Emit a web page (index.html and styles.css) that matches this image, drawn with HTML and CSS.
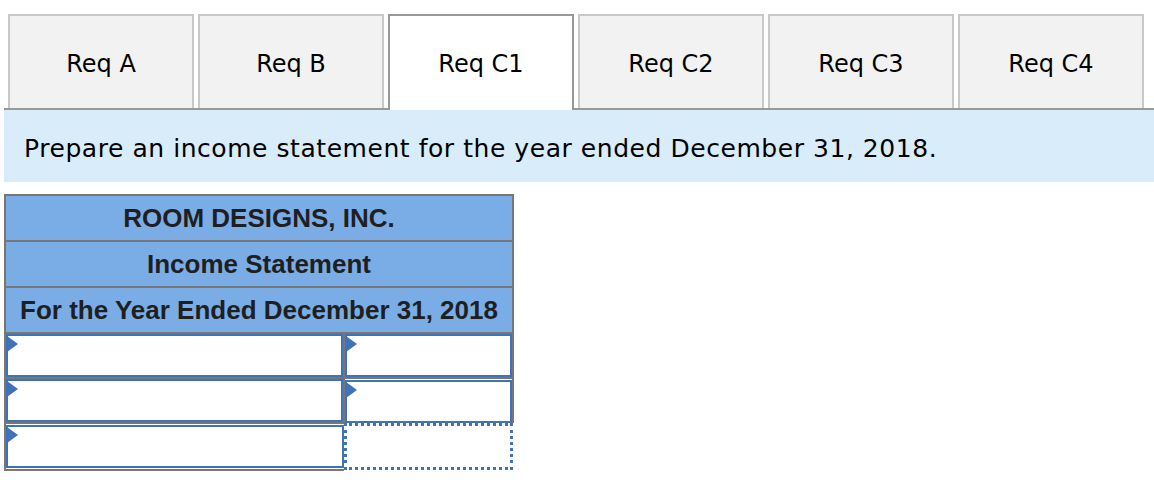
FILE: index.html
```html
<!DOCTYPE html>
<html lang="en">
<head>
    <meta charset="UTF-8">
    <title>Req C1 - Income Statement</title>
    <link rel="stylesheet" href="styles.css">
</head>
<body>
    <div class="tabs">
        <div class="tab">Req A</div>
        <div class="tab">Req B</div>
        <div class="tab active">Req C1</div>
        <div class="tab">Req C2</div>
        <div class="tab">Req C3</div>
        <div class="tab">Req C4</div>
    </div>

    <div class="instructions">Prepare an income statement for the year ended December 31, 2018.</div>

    <table class="statement">
        <tr><th colspan="2">ROOM DESIGNS, INC.</th></tr>
        <tr><th colspan="2">Income Statement</th></tr>
        <tr><th colspan="2">For the Year Ended December 31, 2018</th></tr>
        <tr>
            <td class="label-cell"><div class="entry"><span class="marker"></span></div></td>
            <td class="amount-cell"><div class="entry"><span class="marker"></span></div></td>
        </tr>
        <tr>
            <td class="label-cell"><div class="entry"><span class="marker"></span></div></td>
            <td class="amount-cell"><div class="entry"><span class="marker"></span></div></td>
        </tr>
        <tr>
            <td class="label-cell"><div class="entry"><span class="marker"></span></div></td>
            <td class="amount-cell total"><div class="entry dotted"></div></td>
        </tr>
    </table>
</body>
</html>
```

FILE: styles.css
```css
:root {
    --tab-bg: #f2f2f2;
    --tab-border: #c8c8c8;
    --active-border: #999999;
    --band-bg: #d9ecfa;
    --head-bg: #7aade6;
    --grid-grey: #777777;
    --entry-blue: #3f72b6;
}

body {
    margin: 0;
    background: #ffffff;
    color: #000000;
    font-family: 'DejaVu Sans', Verdana, sans-serif;
}

.tabs {
    display: flex;
    gap: 4px;
    margin: 14px 0 0 4px;
    padding-left: 4px;
    border-bottom: 2px solid var(--active-border);
}

.tab {
    width: 186px;
    height: 94px;
    box-sizing: border-box;
    display: flex;
    align-items: center;
    justify-content: center;
    background: var(--tab-bg);
    border: 2px solid var(--tab-border);
    border-bottom: none;
    font-size: 24px;
    padding-top: 3px;
}

.tab.active {
    background: #ffffff;
    border-color: var(--active-border);
    height: 96px;
    margin-bottom: -2px;
    padding-bottom: 2px;
}

.instructions {
    margin-left: 4px;
    height: 72px;
    box-sizing: border-box;
    display: flex;
    align-items: center;
    padding: 4px 0 0 20px;
    background: var(--band-bg);
    font-size: 25px;
    letter-spacing: 0.55px;
}

.statement {
    margin: 12px 0 0 4px;
    width: 510px;
    border-collapse: collapse;
    font-family: 'Liberation Sans', Arial, sans-serif;
}

.statement th {
    height: 44px;
    padding: 0;
    background: var(--head-bg);
    border: 2px solid var(--grid-grey);
    color: #1f1f1f;
    font-size: 26px;
    font-weight: bold;
    text-align: center;
}

.statement td {
    height: 42px;
    padding: 0;
    border: 2px solid var(--grid-grey);
}

.label-cell {
    width: 337px;
}

.statement td.total {
    border: hidden;
}

.entry {
    position: relative;
    height: 39px;
    border: 2px solid var(--entry-blue);
    background: #ffffff;
}

.entry.dotted {
    height: 41px;
    border: 3px dotted var(--entry-blue);
}

.marker {
    position: absolute;
    left: -1px;
    top: 0;
    width: 0;
    height: 0;
    border-top: 8px solid transparent;
    border-bottom: 8px solid transparent;
    border-left: 11px solid var(--entry-blue);
}
```
